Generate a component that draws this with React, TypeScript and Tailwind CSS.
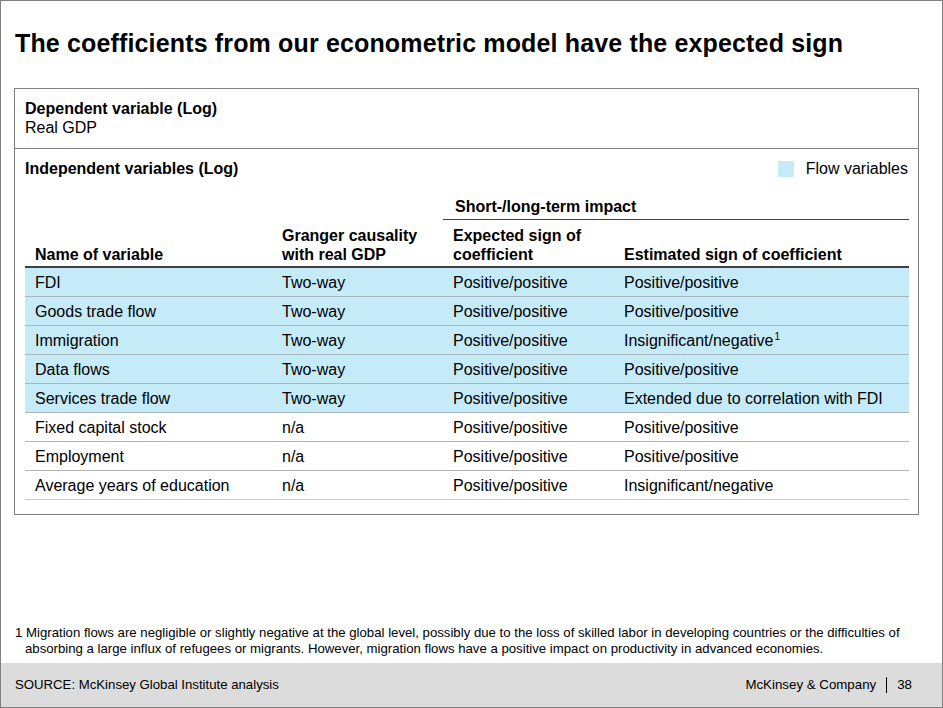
import React from 'react';

type Row = {
  name: string;
  granger: string;
  expected: string;
  estimated: string;
  note?: boolean;
  flow: boolean;
};

const rows: Row[] = [
  { name: 'FDI', granger: 'Two-way', expected: 'Positive/positive', estimated: 'Positive/positive', flow: true },
  { name: 'Goods trade flow', granger: 'Two-way', expected: 'Positive/positive', estimated: 'Positive/positive', flow: true },
  { name: 'Immigration', granger: 'Two-way', expected: 'Positive/positive', estimated: 'Insignificant/negative', note: true, flow: true },
  { name: 'Data flows', granger: 'Two-way', expected: 'Positive/positive', estimated: 'Positive/positive', flow: true },
  { name: 'Services trade flow', granger: 'Two-way', expected: 'Positive/positive', estimated: 'Extended due to correlation with FDI', flow: true },
  { name: 'Fixed capital stock', granger: 'n/a', expected: 'Positive/positive', estimated: 'Positive/positive', flow: false },
  { name: 'Employment', granger: 'n/a', expected: 'Positive/positive', estimated: 'Positive/positive', flow: false },
  { name: 'Average years of education', granger: 'n/a', expected: 'Positive/positive', estimated: 'Insignificant/negative', flow: false },
];

const sans = "font-['Liberation_Sans',Arial,sans-serif]";

export default function App() {
  return (
    <div className={`w-[943px] h-[708px] border border-[#7f7f7f] bg-white flex flex-col text-black ${sans}`}>
      {/* Title */}
      <div className="pt-[28px] pl-[14px]">
        <h1 className="text-[25px] leading-[28px] font-bold tracking-[0.15px]">
          The coefficients from our econometric model have the expected sign
        </h1>
      </div>

      {/* Table box */}
      <div className="mt-[31px] ml-[13px] w-[905px] border border-[#808080]">
        <div className="pt-[10px] pb-[11px] pl-[10px] border-b border-[#808080]">
          <div className="text-[16px] leading-[19px] font-bold">Dependent variable (Log)</div>
          <div className="text-[16px] leading-[19px]">Real GDP</div>
        </div>

        <div className="pt-[10px] pl-[10px] pr-[9px] pb-[14px]">
          <div className="flex items-center justify-between h-[19px]">
            <div className="text-[16px] leading-[19px] font-bold">Independent variables (Log)</div>
            <div className="flex items-center gap-[12px] pr-[1px]">
              <span className="w-[16px] h-[16px] bg-[#c5ebf9]" />
              <span className="text-[16px] leading-[19px]">Flow variables</span>
            </div>
          </div>

          {/* Header */}
          <div className="flex mt-[19px]">
            <div className="w-[418px]" />
            <div className="flex-1">
              <div className="pl-[12px] text-[16px] leading-[19px] font-bold">Short-/long-term impact</div>
              <div className="mt-[3px] border-t border-[#404040]" />
            </div>
          </div>
          <div className="flex items-end h-[48px] pb-[2px] border-b-2 border-[#404040] text-[16px] leading-[19px] font-bold">
            <div className="w-[247px] pl-[10px]">Name of variable</div>
            <div className="w-[171px] pl-[10px]">
              Granger causality
              <br />
              with real GDP
            </div>
            <div className="w-[171px] pl-[10px]">
              Expected sign of
              <br />
              coefficient
            </div>
            <div className="flex-1 pl-[10px]">Estimated sign of coefficient</div>
          </div>

          {/* Rows */}
          {rows.map((r, i) => (
            <div
              key={r.name}
              className={`flex items-center h-[29px] text-[16px] leading-[19px] border-b ${
                r.flow ? 'bg-[#c5ebf9] border-[#a9b7bd]' : 'bg-white'
              } ${!r.flow && i < rows.length - 1 ? 'border-[#b4b4b4]' : ''} ${
                i === rows.length - 1 ? 'border-[#c8c8c8]' : ''
              }`}
            >
              <div className="w-[247px] pl-[10px]">{r.name}</div>
              <div className="w-[171px] pl-[10px]">{r.granger}</div>
              <div className="w-[171px] pl-[10px]">{r.expected}</div>
              <div className="flex-1 pl-[10px]">
                {r.estimated}
                {r.note && <sup className="text-[10px] top-[-0.6em] ml-[1px]">1</sup>}
              </div>
            </div>
          ))}
        </div>
      </div>

      <div className="flex-1" />

      {/* Footnote */}
      <div className="pl-[14px] pr-[20px] pb-[6px] text-[13.2px] leading-[16px]">
        <div className="whitespace-nowrap">
          1 Migration flows are negligible or slightly negative at the global level, possibly due to the loss of skilled labor in developing countries or the difficulties of
        </div>
        <div className="pl-[10px] whitespace-nowrap">
          absorbing a large influx of refugees or migrants. However, migration flows have a positive impact on productivity in advanced economies.
        </div>
      </div>

      {/* Footer */}
      <div className="h-[44px] bg-[#dcdcdc] flex items-center justify-between pl-[14px] pr-[30px]">
        <div className="text-[13.2px]">SOURCE: McKinsey Global Institute analysis</div>
        <div className="flex items-center text-[13.3px]">
          <span>McKinsey &amp; Company</span>
          <span className="mx-[10px] w-px h-[16px] bg-black" />
          <span>38</span>
        </div>
      </div>
    </div>
  );
}
